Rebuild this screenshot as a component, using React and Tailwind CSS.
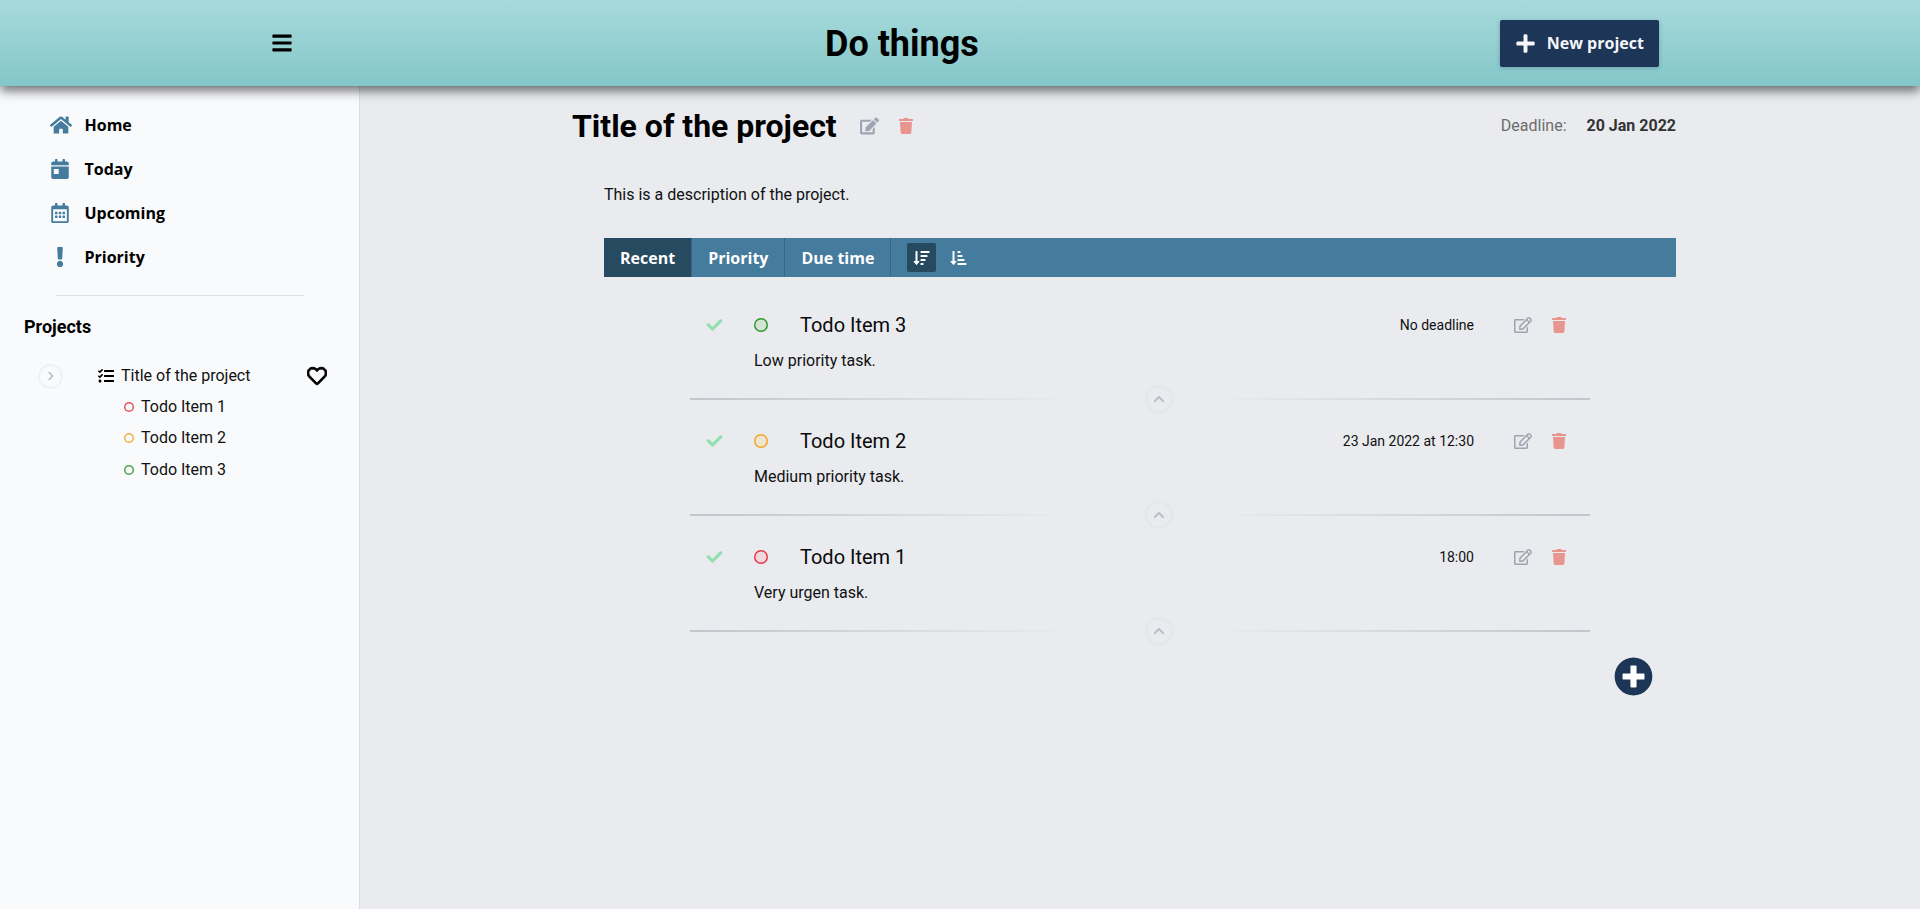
import React from 'react';
import { FaBars, FaPlus, FaPlusCircle, FaHome, FaCalendarDay, FaRegCalendarAlt, FaExclamation, FaTasks, FaRegHeart, FaChevronRight, FaChevronUp, FaEdit, FaRegEdit, FaTrash, FaCheck, FaSortAmountDown, FaSortAmountDownAlt } from 'react-icons/fa';

const nav = [
  [FaHome, 'Home', 'w-[22px] h-[22px]'],
  [FaCalendarDay, 'Today', 'ml-[1px] w-[18px] h-[20px]'],
  [FaRegCalendarAlt, 'Upcoming', 'ml-[1px] w-[18px] h-[20px]'],
  [FaExclamation, 'Priority', 'w-[20px] h-[20px]'],
];

const sideItems = [
  ['Todo Item 1', 'shadow-[inset_0_0_0_1.5px_#e8505b]'],
  ['Todo Item 2', 'shadow-[inset_0_0_0_1.5px_#f4b03e]'],
  ['Todo Item 3', 'shadow-[inset_0_0_0_1.5px_#4aa34a]'],
];

const todos = [
  ['Todo Item 3', 'Low priority task.', 'No deadline', 'bg-[#d3e4d5] shadow-[inset_0_0_0_1.5px_#2f9a2f]'],
  ['Todo Item 2', 'Medium priority task.', '23 Jan 2022 at 12:30', 'bg-[#f0e6d0] shadow-[inset_0_0_0_1.5px_#f4a62a]'],
  ['Todo Item 1', 'Very urgen task.', '18:00', 'bg-[#f0d8dc] shadow-[inset_0_0_0_1.5px_#e63946]'],
];

function Todo({ title, desc, deadline, dot }) {
  return (
    <div className="relative h-[116px] w-[900px] pt-[26px]">
      <div className="flex h-[30px] items-center">
        <div className="ml-[16px] flex w-[48px] items-center">
          <FaCheck className="h-[16px] w-[17px] text-[#95e0b0]" />
        </div>
        <div className={`h-[14px] w-[14px] rounded-full ${dot}`} />
        <div className="ml-[32px] mt-[-1px] text-[20px] text-[#0a0a0a]">{title}</div>
        <div className="ml-auto text-[14px] text-[#111]">{deadline}</div>
        <FaRegEdit className="ml-[40px] h-[18px] w-[18px] text-[#9ea4b0]" />
        <FaTrash className="ml-[20px] mr-[24px] h-[16px] w-[14px] text-[#e8958f]" />
      </div>
      <div className="ml-[64px] mt-[10px] text-[16px] leading-[22px] text-[#111]">{desc}</div>
      <div className="absolute bottom-0 left-0 flex h-[2px] w-full">
        <div className="h-full w-[385px] bg-gradient-to-r from-[#c2c5cb] to-transparent" />
        <div className="h-full flex-1" />
        <div className="h-full w-[378px] bg-gradient-to-l from-[#c2c5cb] to-transparent" />
      </div>
      <div className="absolute bottom-[-13px] left-[455px] flex h-[28px] w-[28px] items-center justify-center rounded-full border-2 border-[#e4e6ea] bg-[#e9ebef]">
        <FaChevronUp className="h-[12px] w-[12px] text-[#b8bcc5]" />
      </div>
    </div>
  );
}

export default function App() {
  return (
    <div className="flex h-[909px] flex-col overflow-hidden bg-[#e9ebef] font-['Roboto',sans-serif] text-black">
      <header className="relative z-10 flex h-[86px] items-center bg-gradient-to-b from-[#a8dadc] to-[#84c7c9] shadow-[0_5px_10px_rgba(0,0,0,0.55)]">
        <FaBars className="ml-[272px] h-[22px] w-[20px] text-black" />
        <h1 className="ml-[533px] mt-[2px] text-[36px] font-bold leading-none">Do things</h1>
        <button className="ml-[521px] flex h-[47px] w-[159px] items-center rounded-[2px] bg-[#1d3557] pl-[15px] font-['Open_Sans',sans-serif] text-[16px] font-bold text-[#f4f6f8] shadow-[0_1px_4px_rgba(29,53,87,0.3)]">
          <FaPlus className="mr-[11px] h-[21px] w-[21px]" />
          New project
        </button>
      </header>
      <div className="flex min-h-0 flex-1">
        <aside className="w-[360px] shrink-0 border-r border-[#dcdee4] bg-[#f9fafc]">
          <nav className="pl-[50px] pt-[17px]">
            {nav.map(([Icon, label, size]) => (
              <div key={label} className="flex h-[44px] items-center">
                <div className="flex w-[34.5px] items-center">
                  <Icon className={`${size} text-[#457b9d]`} />
                </div>
                <span className="font-['Open_Sans',sans-serif] text-[16px] font-bold">{label}</span>
              </div>
            ))}
          </nav>
          <div className="ml-[56px] mt-[16px] h-px w-[248px] bg-[#dcdee4]" />
          <div className="ml-[24px] mt-[19px] text-[18px] font-bold leading-[24px]">Projects</div>
          <div className="mt-[24px] flex h-[26px] items-center">
            <div className="ml-[38px] flex h-[25px] w-[25px] items-center justify-center rounded-full border-2 border-[#f0f1f5]">
              <FaChevronRight className="h-[10px] w-[10px] text-[#b8bcc5]" />
            </div>
            <FaTasks className="ml-[35px] h-[16px] w-[16px]" />
            <span className="ml-[7px] text-[16px] text-[#111]">Title of the project</span>
            <FaRegHeart className="ml-[57px] h-[20px] w-[20px]" stroke="currentColor" strokeWidth={24} />
          </div>
          <div className="mt-[2px] flex flex-col">
            {sideItems.map(([label, color]) => (
              <div key={label} className="flex h-[31.5px] items-center pl-[124px]">
                <div className={`h-[10px] w-[10px] rounded-full ${color}`} />
                <span className="ml-[7px] text-[16px] text-[#111]">{label}</span>
              </div>
            ))}
          </div>
        </aside>
        <main className="flex-1">
          <div className="ml-[212px] w-[1104px]">
            <div className="flex h-[74px] items-center pt-[6px]">
              <h2 className="text-[32px] font-bold leading-none">Title of the project</h2>
              <FaEdit className="ml-[23px] h-[18px] w-[19px] text-[#9ea4b0]" />
              <FaTrash className="ml-[20px] h-[16px] w-[14px] text-[#e8958f]" />
              <span className="ml-auto text-[16px] text-[#6f6d6b]">Deadline:</span>
              <span className="ml-[20px] text-[16px] font-bold text-[#333]">20 Jan 2022</span>
            </div>
            <div className="ml-[32px]">
              <p className="mt-[24px] text-[16px] leading-[22px] text-[#111]">This is a description of the project.</p>
              <div className="mt-[32px] flex h-[39px] items-center bg-[#457b9d] font-['Open_Sans',sans-serif] text-[16px] font-bold text-white">
                <div className="flex h-full items-center bg-[#264a60] px-[16px]">Recent</div>
                <div className="flex h-full items-center border-l border-[#356684] px-[16px]">Priority</div>
                <div className="flex h-full items-center border-x border-[#356684] px-[16px]">Due time</div>
                <div className="ml-[16px] flex h-[29px] w-[29px] items-center justify-center rounded-[2px] bg-[#264a60]">
                  <FaSortAmountDown className="h-[16px] w-[17px]" />
                </div>
                <FaSortAmountDownAlt className="ml-[14px] h-[16px] w-[17px]" />
              </div>
              <div className="ml-[86px] mt-[7px] flex flex-col">
                {todos.map(([t, d, dl, dot]) => (
                  <Todo key={t} title={t} desc={d} deadline={dl} dot={dot} />
                ))}
              </div>
              <div className="ml-[1010px] mt-[25px] h-[39px] w-[39px]">
                <FaPlusCircle className="h-[39px] w-[39px] rounded-full bg-[radial-gradient(circle,#fff_60%,transparent_61%)] text-[#1d3557]" />
              </div>
            </div>
          </div>
        </main>
      </div>
    </div>
  );
}
